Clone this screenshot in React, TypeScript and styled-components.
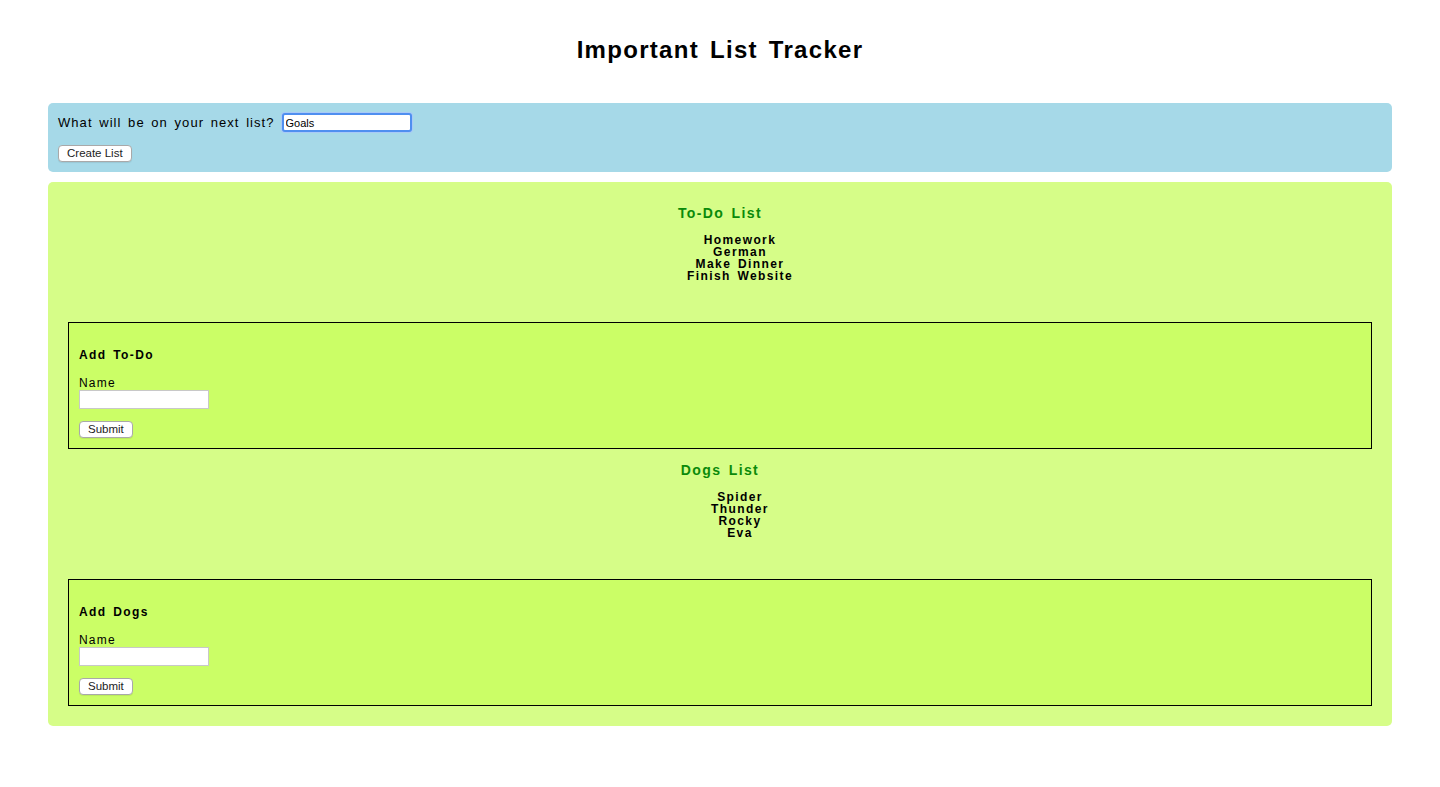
import React from "react";
import styled, { createGlobalStyle } from "styled-components";

const Global = createGlobalStyle`
  html, body { margin: 0; padding: 0; background: #ffffff; }
  body { font-family: "Liberation Sans", Arial, Helvetica, sans-serif; color: #000; }
`;

const Page = styled.div`
  padding: 0 48px;
`;

const Title = styled.h1`
  margin: 0;
  padding-top: 36px;
  margin-bottom: 39px;
  text-align: center;
  font-size: 24px;
  line-height: 28px;
  font-weight: 700;
  letter-spacing: 1.3px;
  word-spacing: 3px;
`;

const CreatePanel = styled.div`
  background: #a6d9e8;
  border-radius: 5px;
  padding: 10px;
  display: flex;
  flex-direction: column;
  gap: 13px;
  align-items: flex-start;
`;

const PromptRow = styled.label`
  display: flex;
  align-items: center;
  gap: 7px;
  font-size: 13px;
  letter-spacing: 1.05px;
  word-spacing: 2px;
  height: 19px;
`;

const FocusedInput = styled.input`
  box-sizing: border-box;
  width: 130px;
  height: 19px;
  border: 2px solid #4f8ff0;
  border-radius: 3px;
  box-shadow: 0 0 0 1px #a9c9f7;
  padding: 0 2px;
  font-family: "Liberation Sans", Arial, sans-serif;
  font-size: 11px;
  letter-spacing: 0;
  word-spacing: 0;
  outline: none;
  background: #fff;
`;

const Button = styled.button`
  box-sizing: border-box;
  height: 17px;
  padding: 0 8px;
  background: #ffffff;
  border: 1px solid #a9a9a9;
  border-radius: 4px;
  font-family: "Liberation Sans", Arial, sans-serif;
  font-size: 11.5px;
  line-height: 15px;
  color: #222;
  box-shadow: 0 1px 1px rgba(0, 0, 0, 0.08);
`;

const ListsPanel = styled.div`
  margin-top: 10px;
  background: #d6fd88;
  border-radius: 5px;
  padding: 10px 20px 20px;
`;

const Section = styled.section`
  display: flex;
  flex-direction: column;
`;

const ListTitle = styled.h3`
  margin: 13px 0 0;
  text-align: center;
  color: #0a8a0a;
  font-size: 14px;
  line-height: 16px;
  font-weight: 700;
  letter-spacing: 1.4px;
  word-spacing: 2px;
`;

const Items = styled.ul`
  list-style: none;
  margin: 13px 0 40px;
  padding: 0 0 0 40px;
  text-align: center;
`;

const Item = styled.li`
  font-size: 12px;
  line-height: 12px;
  font-weight: 700;
  letter-spacing: 1.4px;
  word-spacing: 2px;
`;

const AddBox = styled.form`
  border: 1px solid #000;
  background: #cbfe66;
  padding: 0 10px 10px;
  display: flex;
  flex-direction: column;
  align-items: flex-start;
`;

const AddTitle = styled.h4`
  margin: 25px 0 0;
  font-size: 12px;
  line-height: 14px;
  font-weight: 700;
  letter-spacing: 1.4px;
  word-spacing: 2px;
`;

const FieldLabel = styled.label`
  margin-top: 15px;
  font-size: 12px;
  line-height: 13px;
  letter-spacing: 1.2px;
`;

const TextInput = styled.input`
  box-sizing: border-box;
  width: 130px;
  height: 19px;
  border: 1px solid #c8c8c8;
  background: #fff;
  padding: 0 2px;
  outline: none;
`;

const SubmitButton = styled(Button)`
  margin-top: 12px;
`;

type ListData = { title: string; addTitle: string; items: string[] };

const lists: ListData[] = [
  {
    title: "To-Do List",
    addTitle: "Add To-Do",
    items: ["Homework", "German", "Make Dinner", "Finish Website"],
  },
  {
    title: "Dogs List",
    addTitle: "Add Dogs",
    items: ["Spider", "Thunder", "Rocky", "Eva"],
  },
];

function ListSection({ data }: { data: ListData }) {
  return (
    <Section>
      <ListTitle>{data.title}</ListTitle>
      <Items>
        {data.items.map((it) => (
          <Item key={it}>{it}</Item>
        ))}
      </Items>
      <AddBox onSubmit={(e) => e.preventDefault()}>
        <AddTitle>{data.addTitle}</AddTitle>
        <FieldLabel>Name</FieldLabel>
        <TextInput type="text" />
        <SubmitButton type="submit">Submit</SubmitButton>
      </AddBox>
    </Section>
  );
}

export default function App() {
  return (
    <>
      <Global />
      <Page>
        <Title>Important List Tracker</Title>
        <CreatePanel>
          <PromptRow>
            What will be on your next list?
            <FocusedInput type="text" defaultValue="Goals" />
          </PromptRow>
          <Button type="button">Create List</Button>
        </CreatePanel>
        <ListsPanel>
          {lists.map((l) => (
            <ListSection key={l.title} data={l} />
          ))}
        </ListsPanel>
      </Page>
    </>
  );
}
